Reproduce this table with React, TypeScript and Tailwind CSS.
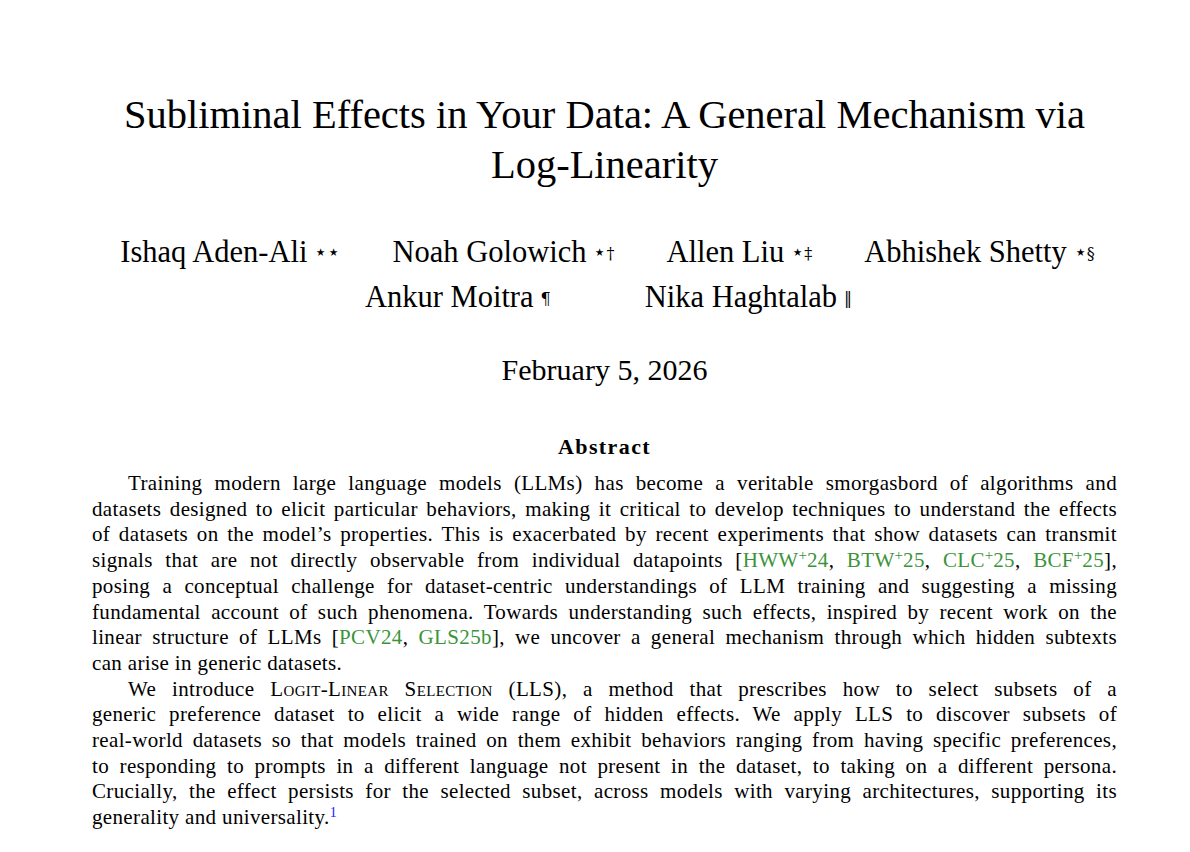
import React from "react";

const Cite = ({ label, sup, year }: { label: string; sup?: boolean; year: string }) => (
  <span className="text-[#3b943b]">
    {label}
    {sup && <sup className="text-[15px] tracking-normal">+</sup>}
    {year}
  </span>
);

const Line = ({ children, last, indent }: { children: React.ReactNode; last?: boolean; indent?: boolean }) => (
  <span
    className={`block ${last ? "text-left" : "text-justify [text-align-last:justify]"} ${indent ? "pl-[36px]" : ""}`}
  >
    {children}
  </span>
);

// marks: leading stars drawn a bit larger than the dagger-style symbols
const Author = ({ name, star, mark }: { name: string; star?: number; mark?: string }) => (
  <span className="shrink-0 whitespace-nowrap">
    {name}
    <sup className="ml-[7px] font-['DejaVu_Serif',serif] relative -top-[3px]">
      {star ? <span className="text-[21px] leading-none">{"⋆".repeat(star)}</span> : null}
      {mark && <span className="text-[16px]">{mark}</span>}
    </sup>
  </span>
);

const App = () => {
  return (
    <div className="min-h-[852px] w-[1190px] bg-white text-black font-['Liberation_Serif',serif]">
      <div className="ml-[92px] w-[1025px] pt-[90px]">
        {/* Title */}
        <h1 className="text-center text-[40.5px] leading-[50px] font-normal">
          Subliminal Effects in Your Data: A General Mechanism via
          <br />
          Log-Linearity
        </h1>

        {/* Authors */}
        <div className="mt-[40px] text-[30.5px] leading-[45px]">
          <div className="flex justify-center gap-[52px] whitespace-nowrap pl-[6px]">
            <Author name="Ishaq Aden-Ali" star={2} />
            <Author name="Noah Golowich" star={1} mark="†" />
            <Author name="Allen Liu" star={1} mark="‡" />
            <Author name="Abhishek Shetty" star={1} mark="§" />
          </div>
          <div className="flex justify-center gap-[94px] whitespace-nowrap pl-[8px]">
            <Author name="Ankur Moitra" mark="¶" />
            <Author name="Nika Haghtalab" mark="‖" />
          </div>
        </div>

        {/* Date */}
        <div className="mt-[32px] text-center text-[30px] leading-[36px]">February 5, 2026</div>

        {/* Abstract */}
        <h2 className="mt-[45px] text-center text-[22px] leading-[28px] font-bold tracking-[1.4px]">Abstract</h2>

        <div className="mt-[10px] text-[21px] leading-[25.7px] tracking-[0.35px]">
          <Line indent>
            Training modern large language models (LLMs) has become a veritable smorgasbord of algorithms and
          </Line>
          <Line>
            datasets designed to elicit particular behaviors, making it critical to develop techniques to understand the effects
          </Line>
          <Line>
            of datasets on the model’s properties. This is exacerbated by recent experiments that show datasets can transmit
          </Line>
          <Line>
            signals that are not directly observable from individual datapoints [<Cite label="HWW" sup year="24" />,{" "}
            <Cite label="BTW" sup year="25" />, <Cite label="CLC" sup year="25" />, <Cite label="BCF" sup year="25" />],
          </Line>
          <Line>
            posing a conceptual challenge for dataset-centric understandings of LLM training and suggesting a missing
          </Line>
          <Line>
            fundamental account of such phenomena. Towards understanding such effects, inspired by recent work on the
          </Line>
          <Line>
            linear structure of LLMs [<Cite label="PCV" year="24" />, <Cite label="GLS" year="25b" />], we uncover a general
            mechanism through which hidden subtexts
          </Line>
          <Line last>can arise in generic datasets.</Line>
          <Line indent>
            We introduce <span className="[font-variant:small-caps]">Logit-Linear Selection</span> (LLS), a method that
            prescribes how to select subsets of a
          </Line>
          <Line>
            generic preference dataset to elicit a wide range of hidden effects. We apply LLS to discover subsets of
          </Line>
          <Line>
            real-world datasets so that models trained on them exhibit behaviors ranging from having specific preferences,
          </Line>
          <Line>
            to responding to prompts in a different language not present in the dataset, to taking on a different persona.
          </Line>
          <Line>
            Crucially, the effect persists for the selected subset, across models with varying architectures, supporting its
          </Line>
          <Line last>
            generality and universality.
            <sup className="text-[14px] text-[#1a1aff]">1</sup>
          </Line>
        </div>
      </div>
    </div>
  );
};

export default App;
